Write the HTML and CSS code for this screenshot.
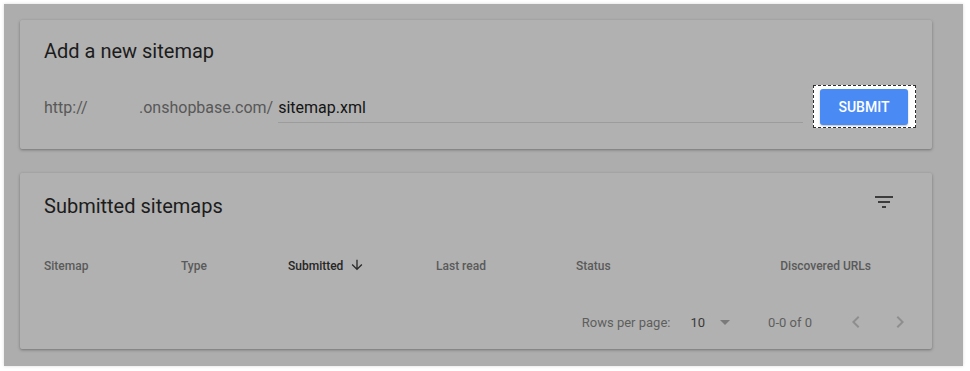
FILE: index.html
```html
<!DOCTYPE html>
<html lang="en">
<head>
    <meta charset="UTF-8">
    <meta name="viewport" content="width=device-width, initial-scale=1.0">
    <title>Sitemaps</title>
    <link rel="stylesheet" href="styles.css">
</head>
<body>
    <div class="backdrop">
        <div class="card add-card">
            <h2 class="card-title">Add a new sitemap</h2>
            <div class="add-row">
                <span class="prefix">http://</span>
                <span class="prefix domain">.onshopbase.com/</span>
                <div class="field">sitemap.xml</div>
                <div class="focus-ring">
                    <button class="submit-btn">SUBMIT</button>
                </div>
            </div>
        </div>

        <div class="card list-card">
            <div class="list-head">
                <h2 class="card-title">Submitted sitemaps</h2>
                <button class="icon-btn" aria-label="Filter">
                    <svg width="24" height="24" viewBox="0 0 24 24"><path d="M10 18h4v-2h-4v2zM3 6v2h18V6H3zm3 7h12v-2H6v2z" fill="#3c3c3c"/></svg>
                </button>
            </div>
            <div class="table-head">
                <span>Sitemap</span>
                <span>Type</span>
                <span class="sorted">Submitted
                    <svg width="16" height="16" viewBox="0 0 24 24"><path d="M20 12l-1.41-1.41L13 16.17V4h-2v12.17l-5.58-5.59L4 12l8 8 8-8z" fill="#2a2a2a"/></svg>
                </span>
                <span>Last read</span>
                <span>Status</span>
                <span class="right">Discovered URLs</span>
            </div>
            <div class="pager">
                <span class="rows-label">Rows per page:</span>
                <span class="rows-value">10</span>
                <svg class="drop" width="24" height="24" viewBox="0 0 24 24"><path d="M7 10l5 5 5-5z" fill="#7a7a7a"/></svg>
                <span class="range">0-0 of 0</span>
                <svg class="chev" width="24" height="24" viewBox="0 0 24 24"><path d="M15.41 7.41L14 6l-6 6 6 6 1.41-1.41L10.83 12z" fill="#8e8e8e"/></svg>
                <svg class="chev" width="24" height="24" viewBox="0 0 24 24"><path d="M10 6L8.59 7.41 13.17 12l-4.58 4.59L10 18l6-6z" fill="#8e8e8e"/></svg>
            </div>
        </div>
    </div>
</body>
</html>
```

FILE: styles.css
```css
body {
    margin: 0;
    padding: 4px;
    background-color: #fff;
    font-family: Roboto, "Liberation Sans", sans-serif;
}
.backdrop {
    width: 959px;
    height: 362px;
    box-sizing: border-box;
    padding: 16px 31px 16px 16px;
    background-color: #adadad;
    box-shadow: 0 0 3px rgba(0, 0, 0, 0.15);
}
.card {
    background-color: #b1b1b1;
    border-radius: 2px;
    box-shadow: 0 1px 3px rgba(0, 0, 0, 0.35);
}
.card-title {
    margin: 0;
    font-size: 20px;
    font-weight: 400;
    line-height: 28px;
    color: #1c1c1c;
}

/* add sitemap */
.add-card {
    height: 129px;
    box-sizing: border-box;
    padding: 17px 16px 0 24px;
}
.add-row {
    display: flex;
    align-items: center;
    margin-top: 20px;
}
.prefix {
    font-size: 16px;
    line-height: 24px;
    color: #585858;
    padding-top: 3px;
    width: 95px;
}
.prefix.domain {
    width: auto;
    margin-right: 5px;
}
.field {
    flex: 1;
    height: 32px;
    box-sizing: border-box;
    padding-top: 5px;
    border-bottom: 1px solid #9c9c9c;
    font-size: 16px;
    line-height: 24px;
    color: #141414;
}
.focus-ring {
    margin-left: 10px;
    padding: 3px 7px 2px 6px;
    background-color: #fff;
    border: 1px dashed #2e2e2e;
}
.submit-btn {
    display: block;
    width: 88px;
    height: 36px;
    border: none;
    border-radius: 3px;
    background-color: #4a8af4;
    color: #fff;
    font-family: Roboto, "Liberation Sans", sans-serif;
    font-size: 14px;
    font-weight: 500;
    box-shadow: 0 1px 2px rgba(0, 0, 0, 0.25);
}

/* submitted sitemaps */
.list-card {
    height: 176px;
    box-sizing: border-box;
    margin-top: 24px;
    padding: 19px 24px 0 24px;
}
.list-head {
    display: flex;
    justify-content: space-between;
    align-items: flex-start;
}
.icon-btn {
    width: 48px;
    height: 48px;
    margin: -14px 0 0 0;
    padding: 12px;
    border: none;
    background: none;
}
.icon-btn svg {
    display: block;
}
.table-head {
    display: grid;
    grid-template-columns: 137px 107px 148px 140px 200px 1fr;
    align-items: center;
    height: 48px;
    margin-top: 16px;
    font-size: 12px;
    font-weight: 500;
    color: #5a5a5a;
}
.table-head .right {
    text-align: right;
    padding-right: 37px;
}
.sorted {
    display: flex;
    align-items: center;
    gap: 6px;
    color: #262626;
}
.sorted svg {
    margin-top: -3px;
}
.pager {
    display: flex;
    align-items: center;
    justify-content: flex-end;
    height: 52px;
    margin-top: 6px;
    margin-right: -4px;
    font-size: 13px;
    color: #5e5e5e;
}
.rows-value {
    margin-left: 20px;
    color: #3a3a3a;
    font-size: 13px;
}
.drop {
    margin-left: 8px;
}
.range {
    margin-left: 31px;
    margin-right: 32px;
}
.chev + .chev {
    margin-left: 20px;
}
```
